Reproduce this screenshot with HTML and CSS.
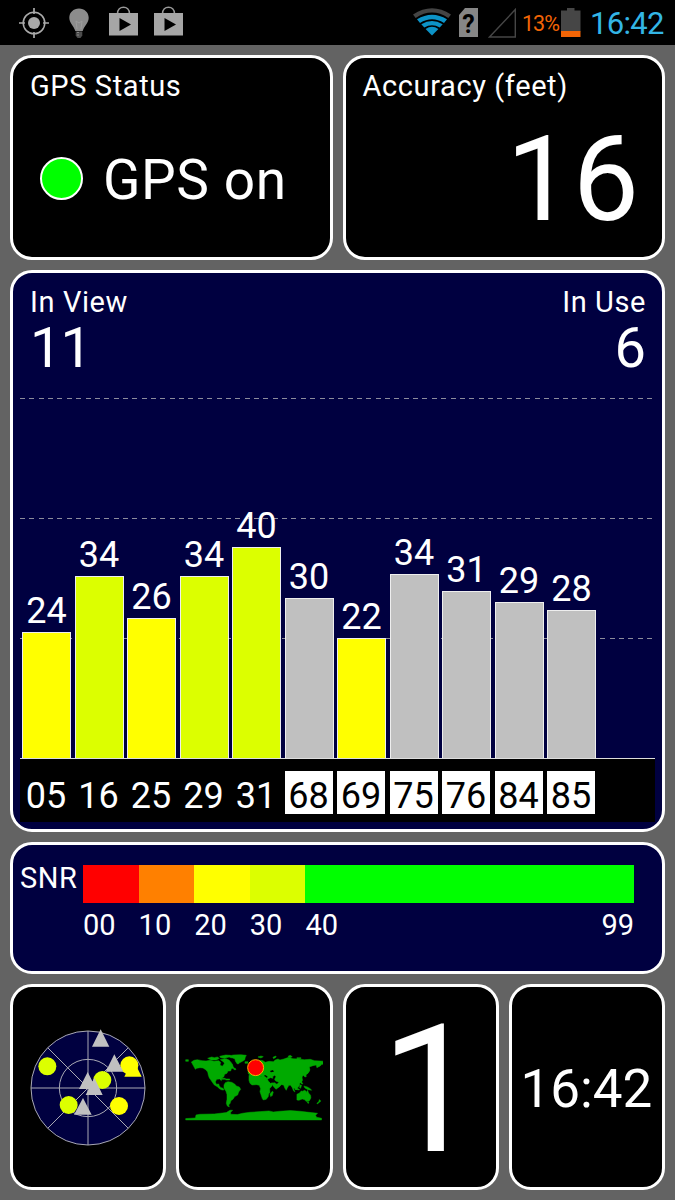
FILE: index.html
```html
<!DOCTYPE html>
<html>
  <head>
    <meta charset="utf-8">
    <title>GPS Status</title>
    <link rel="stylesheet" href="styles.css">
  </head>
  <body>
    <div id="statusBar">
      <svg class="icoGps" width="30" height="30" viewBox="0 0 30 30">
        <circle cx="15" cy="15" r="10.8" fill="none" stroke="#aaa" stroke-width="1.5"/>
        <circle cx="15" cy="15" r="6" fill="#aaa"/>
        <path d="M15 0v6M15 24v6M0 15h6M24 15h6" stroke="#aaa" stroke-width="1.7"/>
      </svg>
      <svg class="icoBulb" width="20" height="31" viewBox="0 0 20 31">
        <path d="M10 .5C4.500 .5 .3 4.500 .3 9.800c0 5 4.200 7.700 6 13.200h7.400c1.800-5.500 6-8.200 6-13.200C19.700 4.500 15.500 .5 10 .5z" fill="#8c8c8c"/>
        <path d="M8 21l-1-8 3 2 3-2-1 8" fill="none" stroke="#9d9d9d" stroke-width="1"/>
        <path d="M6.700 23.500h6.600v4L11.500 30h-3l-1.800-2.500z" fill="#4c4c4c"/>
        <path d="M8 24.500h2M8 27h2" stroke="#888"/>
      </svg>
      <svg class="icoBag" width="29" height="30" viewBox="0 0 29 30">
        <path d="M8.500 8C8.500-1 20.500-1 20.500 8" fill="none" stroke="#999" stroke-width="1.600"/>
        <path d="M0 7h29v22.500H0z" fill="#a6a6a6"/>
        <path d="M10.500 12v13l11.500-6.500z" fill="#000"/>
      </svg>
      <svg class="icoBag2" width="29" height="30" viewBox="0 0 29 30">
        <path d="M8.500 8C8.500-1 20.500-1 20.500 8" fill="none" stroke="#999" stroke-width="1.600"/>
        <path d="M0 7h29v22.500H0z" fill="#a6a6a6"/>
        <path d="M10.500 12v13l11.500-6.500z" fill="#000"/>
      </svg>
      <svg class="icoWifi" width="38" height="28" viewBox="0 0 38 28">
        <path d="M0 6.500Q19-6 38 6.500L35.300 9.900Q19-1 2.700 9.900z" fill="#444"/>
        <path d="M4 11.300Q19 2 34 11.300L31 15Q19 7.500 7 15z" fill="#0c93c7"/>
        <path d="M8.300 16.300Q19 9.500 29.700 16.300L26.700 19.600Q19 15 11.300 19.600z" fill="#0c93c7"/>
        <path d="M12.600 21Q19 16.700 25.400 21L19 27.500z" fill="#0c93c7"/>
      </svg>
      <div class="sim">
        <svg width="19" height="29" viewBox="0 0 19 29"><path d="M6 0h13v29H0V7z" fill="#868686"/></svg>
        <span>?</span>
      </div>
      <svg class="icoSignal" width="28" height="30" viewBox="0 0 28 30">
        <path d="M27.300 1.500v27.500H1.500z" fill="none" stroke="#464646" stroke-width="1.400"/>
      </svg>
      <span class="percent">13%</span>
      <svg class="icoBattery" width="20" height="30" viewBox="0 0 20 30">
        <path d="M0 2.500h6V0h7.500v2.500H19.500v21H0z" fill="#464646"/>
        <path d="M0 23h19.500v6H0z" fill="#f36506"/>
      </svg>
      <span class="clock">16:42</span>
    </div>

    <div id="main">
      <div class="panel status">
        <div class="title">GPS Status</div>
        <div class="state"><i class="led"></i><span>GPS on</span></div>
      </div>
      <div class="panel accuracy">
        <div class="title">Accuracy (feet)</div>
        <div class="value">16</div>
      </div>

      <div class="panel wide sats">
        <div class="counts">
          <div><div class="title">In View</div><div class="num">11</div></div>
          <div class="right"><div class="title">In Use</div><div class="num">6</div></div>
        </div>
        <div class="plot">
          <div class="sat">24<div class="bar yellow" style="height:126px"></div></div>
          <div class="sat">34<div class="bar lime" style="height:182px"></div></div>
          <div class="sat">26<div class="bar yellow" style="height:140px"></div></div>
          <div class="sat">34<div class="bar lime" style="height:182px"></div></div>
          <div class="sat">40<div class="bar lime" style="height:211px"></div></div>
          <div class="sat">30<div class="bar grey" style="height:160px"></div></div>
          <div class="sat">22<div class="bar yellow" style="height:120px"></div></div>
          <div class="sat">34<div class="bar grey" style="height:184px"></div></div>
          <div class="sat">31<div class="bar grey" style="height:167px"></div></div>
          <div class="sat">29<div class="bar grey" style="height:156px"></div></div>
          <div class="sat">28<div class="bar grey" style="height:148px"></div></div>
        </div>
        <div class="ids">
          <span>05</span><span>16</span><span>25</span><span>29</span><span>31</span>
          <span class="glo">68</span><span class="glo">69</span><span class="glo">75</span><span class="glo">76</span><span class="glo">84</span><span class="glo">85</span>
        </div>
      </div>

      <div class="panel wide snr">
        <span class="snrName">SNR</span>
        <div class="scale">
          <div class="step red"><i></i>00</div>
          <div class="step orange"><i></i>10</div>
          <div class="step yellow"><i></i>20</div>
          <div class="step lime"><i></i>30</div>
          <div class="step green"><i></i><span>40</span><span>99</span></div>
        </div>
      </div>

      <div class="wide tiles">
        <div class="panel tile">
          <svg width="120" height="120" viewBox="83 157 360 360">
            <g stroke="#a9a9b4" stroke-width="3" fill="none">
              <circle cx="263" cy="337" r="171" fill="#000040"/>
              <circle cx="263" cy="337" r="86"/>
              <path d="M263 166v342M92 337h342M142 216l242 242M384 216L142 458"/>
            </g>
            <g fill="#dcff00">
              <circle cx="141" cy="272" r="27"/>
              <circle cx="306" cy="313" r="27"/>
              <circle cx="205" cy="388" r="27"/>
            </g>
            <g fill="#ff0">
              <circle cx="387" cy="269" r="27"/>
              <circle cx="356" cy="391" r="27"/>
              <path d="M398 251l26 52h-52z"/>
            </g>
            <path d="M301 161l26 52h-52zM342 236l27 52h-53zM262 289l26 51h-52zM282 306l25 52h-51zM248 367l26 50h-53z" fill="#c0c0c0"/>
          </svg>
        </div>
        <div class="panel tile">
          <svg width="137.600" height="66.600" viewBox="45 240 413 200">
            <g fill="#00aa00" stroke="#00aa00" stroke-width="1.500">
              <!-- americas -->
              <path d="M47 257h8v5h-8zM64 264l8-5 10-2 14 3 12 1 12-2 12 3 14-2 6 5-2 8 7 4 6-8-2-8 8-6 8 7 2 7 8 4 5 9-8 2-2 7-8 0-3 7-7 3-3 8-6 4-1 7-5-5-9 1-4 8 3 7 7-1 2 6 5 5 6 2 3 5-6 0-8-4-6-6-9-5-6-8-6-9-3-4-3-8-2-10-6-7-8-5-9-1-10 2-4 3z"/>
              <path d="M190 282l6 1 2 4-6 0zM155 313h11v3h-11zM167 315h12v3h-12z"/>
              <path d="M113 253l12-4 8 2 9-2 6 4-9 5-16 0zM149 247l18-4 15 1-5 5-13 4-12-2zM151 257l14-3 12 4 7 8 5 8-7 1-8-7-6-3-7-1z"/>
              <path d="M173 247l17-4 22-1 17 2-3 6-2 8-9 5-6 3-4 4-4-1-5-8-1-6-7-3-6-1z"/>
              <path d="M166 326l8-3 11 2 9 5 5 6 9 3 4 7-6 8-3 9-9 5-5 8-6 4-3 9-4 4 2 6-6-3-3-8 2-12 0-14-3-10-6-9 0-10z"/>
              <!-- europe and asia -->
              <path d="M225 263h9v5h-9zM264 249l9-3 7 2-7 4zM242 273l7-4 4 9-8 5zM235 299l-1-10 9-3 8-6 8-5 2-10 11-6 7 1 7 5 11-3 13 1 6-5 8-3 6 3 12-3 14-5 13 4 18 1 16 2 18-1 13 4 17 1 15 1 0 8-10 1-5 5-10 5-2-8-10 2-11 4 2 9-5 9-7 3 1 8-4 1-5-5-4 5 2 10-5 7-10 4-3 5 4 8-6 5-4-6-3 1 4 11-4-3-4-10-5-7-5 0-5 8-3 7-4-6-4-10-7-1-5 6-11 8-8-9-4-9 8-2 7 5 6-6-10-4-3-5 4-8-4-4-6 4 1 5-8-2-8 5-3-3 4-5-7-5-5 0 3 10-5 2-6-8-10 2-5 8z"/>
              <path d="M309 250l8-4 2 3-8 5zM354 247l7-3 6 4-7 3zM381 251h12v3h-12zM413 279l4 1 1 12-4-3zM408 295l7-2-2 6-10 6-2-2zM393 306l3 0 0 6-3 2z"/>
              <!-- africa -->
              <path d="M237 304l13-2 14 0 3 5 9 1 11 1 5 5 3 7 7 6 8 0-4 9-7 8 1 12-4 4-1 8-6 8-9 2-3-4-4-12-3-9 2-9-4-10-8-2-14 1-6-5-3-9z"/>
              <path d="M307 352l3 2-3 11-5 3-2-7zM343 328l3 3-2 4-2-3z"/>
              <!-- oceania -->
              <path d="M362 324l5 4 7 9 0 6-8-7zM375 344l13 1 0 3-13-2zM378 330l8-5 4 6-5 9-6-1zM390 333l5 1-3 9-3-2zM389 316l4 1 3 8 3 5-5-1-4-7zM402 336l10 3 9 5 4 5-11-2-9-5zM381 361l8-4 5-6 5 1 4-3 5 2 1 5 4-7 3 8 6 7 1 8-5 9-8 2-7-6-6-2-10 4-6-1zM412 384l5 0-2 5zM448 377l5 4-4 4-7 5-1-2 6-5z"/>
              <!-- antarctica -->
              <path d="M47 434L76 432 78 423 90 421 133 420 169 416 180 409 188 409 182 415 182 421 202 422 218 418 240 415 272 413 297 411 310 414 330 412 361 410 390 412 424 416 443 418 437 424 440 430 455 433V438H47z"/>
            </g>
            <path d="M300 291l9-3 3 5-9 2zM294 316l4 0 6 11-2 1z" fill="#000"/>
            <circle cx="257" cy="281" r="24" fill="#f00" stroke="#ffb000" stroke-width="3"/>
          </svg>
        </div>
        <div class="panel tile one">1</div>
        <div class="panel tile time">16:42</div>
      </div>
    </div>
  </body>
</html>
```
FILE: styles.css
```css
*{
  box-sizing: border-box;
}
body{
  margin: 0;
  width: 675px;
  height: 1200px;
  background-color: #636363;
  color: #fff;
  font-family: Roboto, sans-serif;
  line-height: 1;
  overflow: hidden;
}
svg{
  display: block;
  flex: none;
}

/* status bar */
#statusBar{
  display: flex;
  align-items: flex-start;
  height: 45px;
  padding: 0 11px 0 19px;
  background-color: #000;
}
.icoGps{
  margin-top: 8px;
}
.icoBulb{
  margin: 8px 0 0 20px;
}
.icoBag{
  margin: 6px 0 0 20px;
}
.icoBag2{
  margin: 6px 0 0 16px;
}
.icoWifi{
  margin: 8px 0 0 auto;
}
.sim{
  display: grid;
  margin: 8px 0 0 8px;
}
.sim svg, .sim span{
  grid-area: 1 / 1;
}
.sim span{
  padding-top: 4px;
  text-align: center;
  font-size: 25px;
  font-weight: 700;
  color: #000;
}
.icoSignal{
  margin: 8px 0 0 10px;
}
.percent{
  width: 37px;
  margin: 13px 0 0 6px;
  font-size: 21.5px;
  letter-spacing: -1px;
  color: #f36506;
}
.icoBattery{
  margin: 8px 0 0 2px;
}
.clock{
  width: 74px;
  margin: 8px 0 0 9px;
  font-size: 31px;
  letter-spacing: -0.7px;
  color: #33b5e5;
}

#main{
  display: grid;
  grid-template-columns: 1fr 1fr;
  grid-template-rows: 205px 562px 132px 206px;
  gap: 10px;
  padding: 10px;
}
.wide{
  grid-column: 1 / 3;
}
.panel{
  border: 3px solid #fff;
  border-radius: 22px;
  background-color: #000;
}
.title{
  font-size: 29px;
  letter-spacing: 0.6px;
}

.status, .accuracy{
  padding: 14px 17px;
}
.state{
  display: flex;
  align-items: center;
  margin-top: 52px;
  padding-left: 10px;
  font-size: 55px;
  letter-spacing: 0.6px;
}
.led{
  width: 43px;
  height: 43px;
  margin: -5px 20px 0 0;
  border: 2px solid #fff;
  border-radius: 50%;
  background-color: #0f0;
}
.value{
  margin: 20px 6px 0 0;
  text-align: right;
  font-size: 118px;
}

/* satellites chart */
.sats{
  display: flex;
  flex-direction: column;
  padding: 15px 7px 7px;
  background-color: #000040;
}
.counts{
  display: flex;
  justify-content: space-between;
  padding: 0 10px;
}
.right{
  text-align: right;
}
.right .title{
  margin-right: -1px;
}
.num{
  margin-top: 3px;
  font-size: 56px;
  letter-spacing: -1px;
}
.plot{
  display: flex;
  align-items: flex-end;
  gap: 3.5px;
  height: 361px;
  margin-top: auto;
  padding-left: 2px;
  border-bottom: 1px solid #ddd;
  --dash: repeating-linear-gradient(90deg, #8c8c9c 0 5px, transparent 5px 9.36px);
  background-image: var(--dash), var(--dash), var(--dash);
  background-size: 100% 1px;
  background-position: 0 0, 0 120px, 0 240px;
  background-repeat: no-repeat;
}
.sat{
  width: 49px;
  text-align: center;
  font-size: 36px;
}
.bar{
  margin-top: 3px;
  border: 1px solid #eee;
  border-bottom: 0;
}
.yellow{
  --c: #ff0;
}
.lime{
  --c: #dcff00;
}
.grey{
  --c: #c0c0c0;
}
.red{
  --c: #f00;
}
.orange{
  --c: #ff8000;
}
.green{
  --c: #0f0;
}
.bar, .step i{
  background-color: var(--c);
}
.ids{
  display: flex;
  gap: 4.5px;
  height: 63px;
  padding: 12px 2px;
  background-color: #000;
}
.ids span{
  width: 48px;
  height: 43px;
  padding-top: 7px;
  text-align: center;
  font-size: 36px;
}
.ids .glo{
  background-color: #fff;
  color: #000;
}

/* SNR scale */
.snr{
  display: flex;
  padding: 20px 28px 0 7px;
  background-color: #000040;
  font-size: 29px;
}
.snrName{
  width: 63px;
  margin-top: -1px;
  letter-spacing: 0.6px;
}
.scale{
  display: flex;
  flex: 1;
}
.step{
  width: 55.6px;
}
.step i{
  display: block;
  height: 38px;
  margin-bottom: 8px;
}
.green{
  flex: 1;
  display: flex;
  flex-wrap: wrap;
  align-content: flex-start;
  justify-content: space-between;
}
.green i{
  width: 100%;
}

.tiles{
  display: grid;
  grid-template-columns: repeat(4, 1fr);
  gap: 10px;
}
.tile{
  display: flex;
  justify-content: center;
  align-items: center;
  padding: 1px 1px 0 0;
}
.one{
  padding: 6px 0 0 20px;
  font-size: 178px;
}
.time{
  padding-top: 5px;
  font-size: 53px;
}
```
